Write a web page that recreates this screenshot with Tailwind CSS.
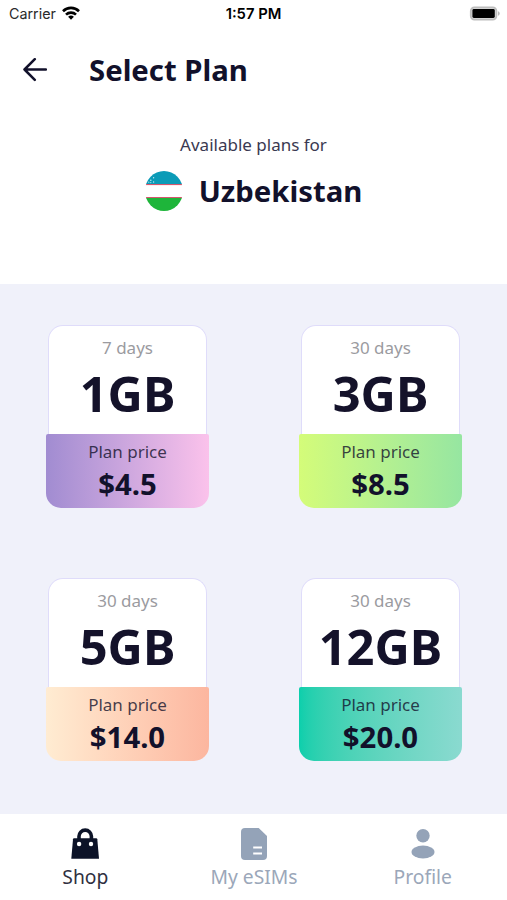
<!DOCTYPE html>
<html lang="en">

<head>
    <meta charset="UTF-8">
    <meta name="viewport" content="width=device-width, initial-scale=1.0">
    <script src="https://cdn.jsdelivr.net/npm/@tailwindcss/browser@4"></script>
    <title>Select Plan</title>
</head>

<body class="bg-white">
    <div class="flex flex-col w-[507px] h-[900px] overflow-hidden font-['Noto_Sans',sans-serif] text-[#12112b]">
        <!-- Status bar -->
        <div class="grid grid-cols-3 items-center h-7 pl-[7px] pr-[7px] font-['Inter',sans-serif] text-black">
            <div class="flex items-center gap-[6px] pl-[2px]">
                <span class="text-[14.3px] leading-7 text-[#2a2a2a]">Carrier</span>
                <svg class="w-[18px] h-[14px] -mt-[2px]" viewBox="0 0 18 14" fill="none" stroke="#000" stroke-width="2.6">
                    <path d="M1 5.2a11.4 11.4 0 0 1 16 0" />
                    <path d="M4 8.7a7.1 7.1 0 0 1 10 0" />
                    <path d="M9 13.8l-2.9-3a4.2 4.2 0 0 1 5.8 0z" fill="#000" stroke="none" />
                </svg>
            </div>
            <span class="text-center text-[14.8px] leading-7 font-semibold whitespace-nowrap">1:57 PM</span>
            <svg class="justify-self-end w-[31px] h-[15px] -mt-[2px]" viewBox="0 0 31 15">
                <rect x="1.8" y="1.3" width="25.6" height="12.4" rx="3.6" fill="#ddd" stroke="#bdbdbd" stroke-width="1.8" />
                <rect x="3.4" y="3" width="22.4" height="9" rx="1.4" fill="#000" />
                <path d="M29 5.2q1.7 .6 1.7 2.3t-1.7 2.3z" fill="#b9b9b9" />
            </svg>
        </div>

        <!-- Header -->
        <div class="flex items-center h-[84px] pl-[23px]">
            <svg class="w-6 h-6" viewBox="0 0 24 24" fill="none" stroke="#12112b" stroke-width="2.5"
                stroke-linecap="round" stroke-linejoin="round">
                <path d="M23 11.5H1.5M11.8 1.2L1.5 11.5l10.3 10.3" />
            </svg>
            <h1 class="ml-[42px] text-[29.3px] leading-10 font-bold">Select Plan</h1>
        </div>

        <!-- Country -->
        <div class="flex flex-col items-center h-[172px] pt-5">
            <p class="text-[17px] leading-[26px] text-[#3a3951]">Available plans for</p>
            <div class="flex items-center gap-4 mt-[13px]">
                <svg class="w-[38px] h-10 -mt-px" viewBox="0 0 38 40">
                    <clipPath id="flag">
                        <ellipse cx="19" cy="20" rx="19" ry="20" />
                    </clipPath>
                    <g clip-path="url(#flag)">
                        <rect width="38" height="40" fill="#fff" />
                        <rect width="38" height="13.2" fill="#0b9bb7" />
                        <rect y="13" width="38" height="1.1" fill="#d4576d" />
                        <rect y="26" width="38" height="1.1" fill="#d4576d" />
                        <rect y="27" width="38" height="13" fill="#1eb53a" />
                        <g fill="#bfe6ee">
                            <circle cx="8.6" cy="6.8" r=".7" />
                            <circle cx="8.6" cy="11" r=".7" />
                            <circle cx="5.8" cy="9.2" r=".8" />
                            <circle cx="5.8" cy="11.6" r=".6" />
                            <circle cx="3.8" cy="11.2" r=".6" />
                        </g>
                    </g>
                </svg>
                <h2 class="text-[29.3px] leading-10 font-bold">Uzbekistan</h2>
            </div>
        </div>

        <!-- Plans -->
        <div class="grid grid-cols-2 content-start justify-items-center gap-y-[70px] h-[530px] pl-px pt-[40.5px] bg-[#f0f1fa]">
            <div class="flex flex-col items-center w-[163.5px] text-center">
                <div class="w-[159px] h-[109.5px] pt-[9px] bg-white border border-b-0 border-[#dfdcfa] rounded-t-[15px]">
                    <p class="text-[17px] leading-[26px] text-[#9b9b9f]">7 days</p>
                    <p class="mt-px text-[48.8px] leading-[62px] font-bold text-[#14122a]">1GB</p>
                </div>
                <div class="w-full h-[73.5px] pt-[4.5px] rounded-t-[2px] rounded-b-[15px] bg-linear-to-r from-[#a18cd1] to-[#fbc2eb]">
                    <p class="text-[17px] leading-[26px] text-[#12112b]/80">Plan price</p>
                    <p class="text-[29.3px] leading-[38px] font-bold">$4.5</p>
                </div>
            </div>
            <div class="flex flex-col items-center w-[163.5px] text-center">
                <div class="w-[159px] h-[109.5px] pt-[9px] bg-white border border-b-0 border-[#dfdcfa] rounded-t-[15px]">
                    <p class="text-[17px] leading-[26px] text-[#9b9b9f]">30 days</p>
                    <p class="mt-px text-[48.8px] leading-[62px] font-bold text-[#14122a]">3GB</p>
                </div>
                <div class="w-full h-[73.5px] pt-[4.5px] rounded-t-[2px] rounded-b-[15px] bg-linear-to-r from-[#d4fc79] to-[#96e6a1]">
                    <p class="text-[17px] leading-[26px] text-[#12112b]/80">Plan price</p>
                    <p class="text-[29.3px] leading-[38px] font-bold">$8.5</p>
                </div>
            </div>
            <div class="flex flex-col items-center w-[163.5px] text-center">
                <div class="w-[159px] h-[109.5px] pt-[9px] bg-white border border-b-0 border-[#dfdcfa] rounded-t-[15px]">
                    <p class="text-[17px] leading-[26px] text-[#9b9b9f]">30 days</p>
                    <p class="mt-px text-[48.8px] leading-[62px] font-bold text-[#14122a]">5GB</p>
                </div>
                <div class="w-full h-[73.5px] pt-[4.5px] rounded-t-[2px] rounded-b-[15px] bg-linear-to-r from-[#ffecd2] to-[#fcb69f]">
                    <p class="text-[17px] leading-[26px] text-[#12112b]/80">Plan price</p>
                    <p class="text-[29.3px] leading-[38px] font-bold">$14.0</p>
                </div>
            </div>
            <div class="flex flex-col items-center w-[163.5px] text-center">
                <div class="w-[159px] h-[109.5px] pt-[9px] bg-white border border-b-0 border-[#dfdcfa] rounded-t-[15px]">
                    <p class="text-[17px] leading-[26px] text-[#9b9b9f]">30 days</p>
                    <p class="mt-px text-[48.8px] leading-[62px] font-bold text-[#14122a]">12GB</p>
                </div>
                <div class="w-full h-[73.5px] pt-[4.5px] rounded-t-[2px] rounded-b-[15px] bg-linear-to-r from-[#0acfac] to-[#8adad0]">
                    <p class="text-[17px] leading-[26px] text-[#12112b]/80">Plan price</p>
                    <p class="text-[29.3px] leading-[38px] font-bold">$20.0</p>
                </div>
            </div>
        </div>

        <!-- Bottom tabs -->
        <div class="grid grid-cols-3 h-[86px] pt-[14px] pl-px bg-white text-[19.3px] leading-7 text-[#9ba7b9]">
            <div class="flex flex-col items-center gap-[3px]">
                <svg class="w-7 h-8" viewBox="0 0 28 32">
                    <path d="M8 14V8.3a6.2 6.2 0 0 1 12.4 0V14" fill="none" stroke="#0c1328" stroke-width="3.6" />
                    <path d="M3 10.3h22.2q1 0 1.1 1L28 30.8H0.3L2 11.3q.1-1 1-1z" fill="#0c1328" />
                    <circle cx="8.1" cy="16" r="2.2" fill="#fff" />
                    <circle cx="20" cy="16" r="2.2" fill="#fff" />
                </svg>
                <span class="text-[#30303f]">Shop</span>
            </div>
            <div class="flex flex-col items-center gap-[3px]">
                <svg class="w-[26px] h-8" viewBox="0 0 26 32">
                    <path d="M4 0h13.7L26 8v20a4 4 0 0 1-4 4H4a4 4 0 0 1-4-4V4a4 4 0 0 1 4-4z" fill="#94a3b8" />
                    <path d="M12.2 19.5h8.8M12.2 25.5h8.8" stroke="#fff" stroke-width="1.8" />
                </svg>
                <span>My eSIMs</span>
            </div>
            <div class="flex flex-col items-center gap-[3px]">
                <svg class="w-6 h-8" viewBox="0 0 24 32">
                    <circle cx="12" cy="7.7" r="6.7" fill="#94a3b8" />
                    <ellipse cx="12" cy="24" rx="11.5" ry="6.5" fill="#94a3b8" />
                </svg>
                <span>Profile</span>
            </div>
        </div>
    </div>
</body>

</html>
